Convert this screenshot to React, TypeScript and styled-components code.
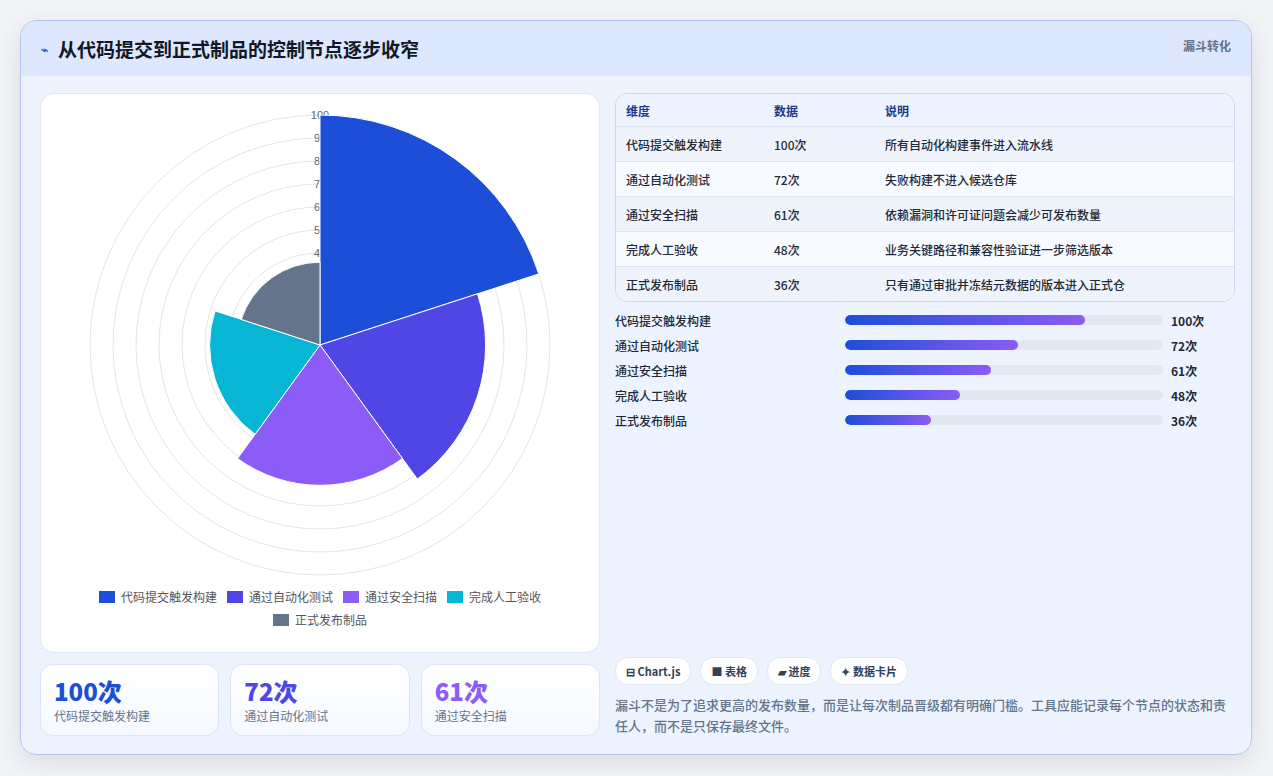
import React from "react";
import styled, { createGlobalStyle } from "styled-components";

const G = createGlobalStyle`
  body{margin:0;background:#f3f4f6;font-family:"Noto Sans CJK SC","Noto Sans",sans-serif;}
`;
const Page = styled.div`padding:20px 21px 20px 20px;`;
const Card = styled.div`
  border:1px solid #b7c4ee;border-radius:16px;overflow:hidden;
  background:linear-gradient(180deg,#eef3fe,#edf4ff);box-shadow:0 8px 24px rgba(30,50,120,.12);
`;
const Header = styled.div`
  height:55px;background:#dde7fd;display:flex;align-items:center;justify-content:space-between;padding:0 20px;
`;
const Title = styled.h1`margin:0;font-size:19px;font-weight:700;color:#111827;display:flex;align-items:center;gap:10px;`;
const Tag = styled.span`font-size:12px;font-weight:700;color:#64748b;align-self:flex-start;margin-top:16px;`;
const Body = styled.div`display:grid;grid-template-columns:560px 620px;gap:15px;padding:17px 19px 18px 19px;`;
const Left = styled.div`display:flex;flex-direction:column;gap:11px;`;
const ChartCard = styled.div`
  height:558px;background:#fff;border:1px solid #e2e8f5;border-radius:14px;display:flex;flex-direction:column;align-items:center;
`;
const Legend = styled.div`display:flex;flex-wrap:wrap;justify-content:center;gap:6px 10px;width:470px;font-size:12px;color:#555;margin-top:4px;`;
const LItem = styled.span`display:flex;align-items:center;gap:6px;`;
const Sw = styled.span<{c:string}>`width:16px;height:12px;background:${p=>p.c};`;
const Stats = styled.div`display:grid;grid-template-columns:repeat(3,1fr);gap:11px;`;
const Stat = styled.div`height:72px;box-sizing:border-box;padding:10px 13px;border:1px solid #dbe5f7;border-radius:13px;background:linear-gradient(180deg,#fff,#f5f9ff);`;
const Big = styled.div<{c:string}>`font-size:24px;font-weight:800;color:${p=>p.c};line-height:32px;`;
const Sub = styled.div`font-size:12px;color:#64748b;`;
const Right = styled.div`display:flex;flex-direction:column;`;
const Table = styled.div`border:1px solid #cdd8ee;border-radius:12px;overflow:hidden;`;
const Row = styled.div<{bg:string;head?:boolean}>`
  display:grid;grid-template-columns:148px 111px 1fr;height:${p=>p.head?32:34}px;align-items:center;padding:0 10px;
  background:${p=>p.bg};font-size:12px;color:${p=>p.head?"#1e3a8a":"#1f2937"};font-weight:${p=>p.head?700:500};
  border-top:${p=>p.head?"none":"1px solid #dfe6f3"};
`;
const Bars = styled.div`display:flex;flex-direction:column;gap:7px;margin-top:9px;`;
const BarRow = styled.div`display:grid;grid-template-columns:230px 318px 1fr;gap:0;align-items:center;height:18px;font-size:12px;color:#1f2937;font-weight:500;`;
const Track = styled.div`height:10px;border-radius:5px;background:#e2e8f0;overflow:hidden;`;
const Fill = styled.div`height:100%;border-radius:5px;background:linear-gradient(90deg,#1d4ed8,#8b5cf6);`;
const Val = styled.span`font-weight:700;padding-left:8px;`;
const Chips = styled.div`display:flex;gap:9px;margin-top:auto;`;
const Chip = styled.span`height:26px;padding:0 10px;border-radius:13px;background:#fff;border:1px solid #e2e8f0;font-size:11px;font-weight:700;color:#334155;display:flex;align-items:center;gap:3px;`;
const Para = styled.p`margin:9px 0 0;font-size:13px;line-height:21px;color:#64748b;font-weight:500;`;

const names=["代码提交触发构建","通过自动化测试","通过安全扫描","完成人工验收","正式发布制品"];
const vals=[100,72,61,48,36];
const cols=["#1d4ed8","#4f46e5","#8b5cf6","#06b6d4","#64748b"];
const desc=["所有自动化构建事件进入流水线","失败构建不进入候选仓库","依赖漏洞和许可证问题会减少可发布数量","业务关键路径和兼容性验证进一步筛选版本","只有通过审批并冻结元数据的版本进入正式仓"];

function Polar(){
  const cx=279,cy=251,k=2.3;
  const pt=(r:number,a:number)=>[cx+r*Math.cos(a),cy+r*Math.sin(a)];
  return(
    <svg width="558" height="490">
      {[1,2,3,4,5,6,7,8,9,10].map(i=><circle key={i} cx={cx} cy={cy} r={i*23} fill="none" stroke="#e5e5e5"/>)}
      {[4,5,6,7,8,9,10].map(i=><text key={i} x={cx} y={cy-i*23+4} fontSize="11" fill="#666" textAnchor="middle" fontFamily="Liberation Sans">{i*10}</text>)}
      {vals.map((v,i)=>{
        const a0=-Math.PI/2+i*2*Math.PI/5,a1=a0+2*Math.PI/5,r=v*k;
        const [x0,y0]=pt(r,a0),[x1,y1]=pt(r,a1);
        return <path key={i} d={`M${cx} ${cy}L${x0} ${y0}A${r} ${r} 0 0 1 ${x1} ${y1}Z`} fill={cols[i]} stroke="#fff" strokeWidth="1"/>;
      })}
    </svg>
  );
}

export default function App(){
  return(<Page><G/><Card>
    <Header><Title><span style={{color:"#2563eb",fontSize:12}}>⌁</span>从代码提交到正式制品的控制节点逐步收窄</Title><Tag>漏斗转化</Tag></Header>
    <Body>
      <Left>
        <ChartCard>
          <Polar/>
          <Legend>{names.map((n,i)=><LItem key={n}><Sw c={cols[i]}/>{n}</LItem>)}</Legend>
        </ChartCard>
        <Stats>{[0,1,2].map(i=><Stat key={i}><Big c={["#1d4ed8","#4f46e5","#8b5cf6"][i]}>{vals[i]}次</Big><Sub>{names[i]}</Sub></Stat>)}</Stats>
      </Left>
      <Right>
        <Table>
          <Row head bg="#eef4ff"><span>维度</span><span>数据</span><span>说明</span></Row>
          {names.map((n,i)=><Row key={n} bg={i%2?"#f7faff":"#eef3fc"}><span>{n}</span><span>{vals[i]}次</span><span>{desc[i]}</span></Row>)}
        </Table>
        <Bars>{names.map((n,i)=><BarRow key={n}><span>{n}</span><Track><Fill style={{width:`${vals[i]*0.755}%`}}/></Track><Val>{vals[i]}次</Val></BarRow>)}</Bars>
        <Chips><Chip>⊟ Chart.js</Chip><Chip>■ 表格</Chip><Chip>▰ 进度</Chip><Chip>✦ 数据卡片</Chip></Chips>
        <Para>漏斗不是为了追求更高的发布数量，而是让每次制品晋级都有明确门槛。工具应能记录每个节点的状态和责任人，而不是只保存最终文件。</Para>
      </Right>
    </Body>
  </Card></Page>);
}
